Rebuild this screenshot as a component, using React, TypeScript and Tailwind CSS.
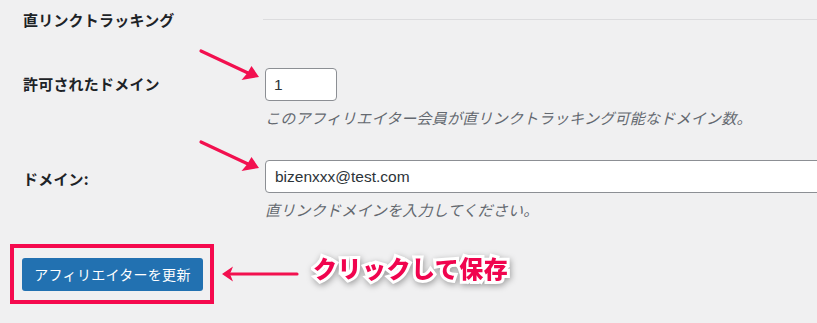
const JP = "font-['Noto_Sans_CJK_JP','Noto_Sans',sans-serif]";

function DiagArrow({ top }: { top: number }) {
  return (
    <svg
      className="absolute left-[190px]"
      style={{ top }}
      width="80"
      height="45"
      viewBox="190 40 80 45"
    >
      <line x1="201" y1="51" x2="248" y2="73" stroke="#f2104f" strokeWidth="3.2" strokeLinecap="round" />
      <polygon points="259,77 251.5,66 247,73.5 241.5,80" fill="#f2104f" />
    </svg>
  );
}

function LeftArrow() {
  return (
    <svg width="78" height="20" viewBox="0 0 78 20" className="ml-[7px] shrink-0">
      <line x1="10" y1="10" x2="76" y2="10" stroke="#f2104f" strokeWidth="3.2" strokeLinecap="round" />
      <polygon points="1,10 12,2.5 9,10 12,17.5" fill="#f2104f" />
    </svg>
  );
}

export default function App() {
  return (
    <div className={`relative h-[323px] w-full overflow-hidden bg-[#f0f0f1] ${JP}`}>
      <DiagArrow top={40} />
      <DiagArrow top={131} />

      <div className="grid grid-cols-[242px_1fr] pl-[23px] pt-[10px]">
        {/* heading row */}
        <h2 className="h-[20px] text-[15px] leading-[20px] font-bold tracking-[0.2px] text-[#1d2327]">
          直リンクトラッキング
        </h2>
        <div className="-ml-[2px] mt-[9px] h-px bg-[#dcdcde]" />

        {/* allowed domains */}
        <div className="mt-[38px] pt-[6px] text-[15px] leading-[20px] font-bold tracking-[0.2px] text-[#1d2327]">
          許可されたドメイン
        </div>
        <div className="mt-[38px]">
          <div className="flex h-[33px] w-[72px] items-center rounded-[4px] border border-[#8c8f94] bg-white px-[8px] font-['Liberation_Sans',sans-serif] text-[15.5px] text-[#2c3338]">
            1
          </div>
          <p className="mt-[7px] text-[15px] leading-[20px] tracking-[0.25px] text-[#646970] italic">
            このアフィリエイター会員が直リンクトラッキング可能なドメイン数。
          </p>
        </div>

        {/* domain */}
        <div className="mt-[32px] pt-[9px] text-[15px] leading-[20px] font-bold tracking-[0.2px] text-[#1d2327]">
          ドメイン:
        </div>
        <div className="mt-[32px]">
          <div className="flex h-[33px] w-[600px] items-center rounded-[4px] border border-[#8c8f94] bg-white px-[9px] font-['Liberation_Sans',sans-serif] text-[15.5px] text-[#2c3338]">
            bizenxxx@test.com
          </div>
          <p className="mt-[7px] text-[15px] leading-[20px] tracking-[0.25px] text-[#646970] italic">
            直リンクドメインを入力してください。
          </p>
        </div>
      </div>

      {/* submit row */}
      <div className="mt-[24px] flex items-center pl-[10px]">
        <div className="border-4 border-[#f50a4e] pt-[10px] pr-[7px] pb-[9px] pl-[8px]">
          <button className="flex h-[33px] w-[181px] items-center justify-center rounded-[3px] bg-[#2271b1] text-[14px] tracking-[0.3px] text-white">
            アフィリエイターを更新
          </button>
        </div>
        <LeftArrow />
        <span className="mb-[12px] ml-[14px] text-[24px] leading-[30px] font-black tracking-[0.5px] text-[#f0044e] [paint-order:stroke_fill] [-webkit-text-stroke:6px_#ffffff] [filter:drop-shadow(1px_2px_3px_rgba(0,0,0,0.35))]">
          クリックして保存
        </span>
      </div>
    </div>
  );
}
